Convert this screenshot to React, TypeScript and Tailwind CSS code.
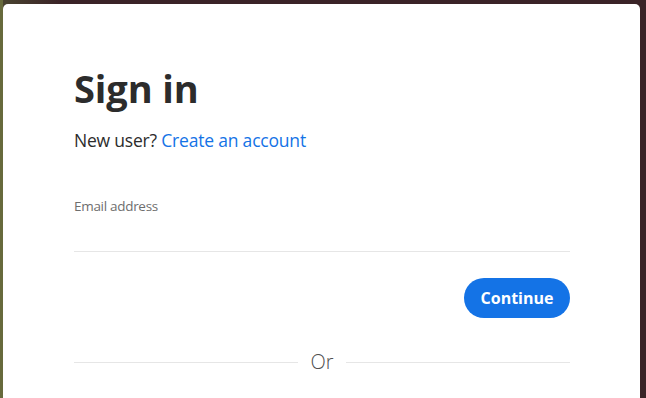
export default function App() {
  return (
    <div className="h-[398px] w-[646px] overflow-hidden bg-[#3a2327] bg-[linear-gradient(90deg,#676a3c_0px,#676a3c_3px,transparent_3px),linear-gradient(90deg,#4a4530_0px,#3a2327_60px)] pl-[3px] pr-[6px] pt-[4px] font-['Open_Sans',sans-serif]">
      <div className="h-[420px] rounded-t-[5px] bg-white pl-[71px] pr-[70px] pt-[60px] text-[#2c2c2c]">
        {/* Heading */}
        <h1 className="text-[38px] font-bold leading-[48px] tracking-[-0.1px]">Sign in</h1>
        <p className="mt-[16px] text-[17.5px] leading-[24px] tracking-[-0.2px]">
          New user? <a className="text-[#1473e6]">Create an account</a>
        </p>

        {/* Email */}
        <div className="mt-[44px]">
          <label className="block text-[13.5px] leading-[20px] tracking-[-0.3px] text-[#6e6e6e]">Email address</label>
          <div className="mt-[35px] h-px bg-[#e6e6e6]" />
        </div>

        <div className="mt-[26px] flex justify-end">
          <button className="h-[40px] w-[106px] rounded-full bg-[#1473e6] text-[16px] font-bold text-white">
            Continue
          </button>
        </div>

        {/* Divider */}
        <div className="mt-[30px] flex items-center gap-3">
          <div className="h-px flex-1 bg-[#e6e6e6]" />
          <span className="text-[20px] font-light leading-[28px] text-[#505050]">Or</span>
          <div className="h-px flex-1 bg-[#e6e6e6]" />
        </div>
      </div>
    </div>
  );
}
